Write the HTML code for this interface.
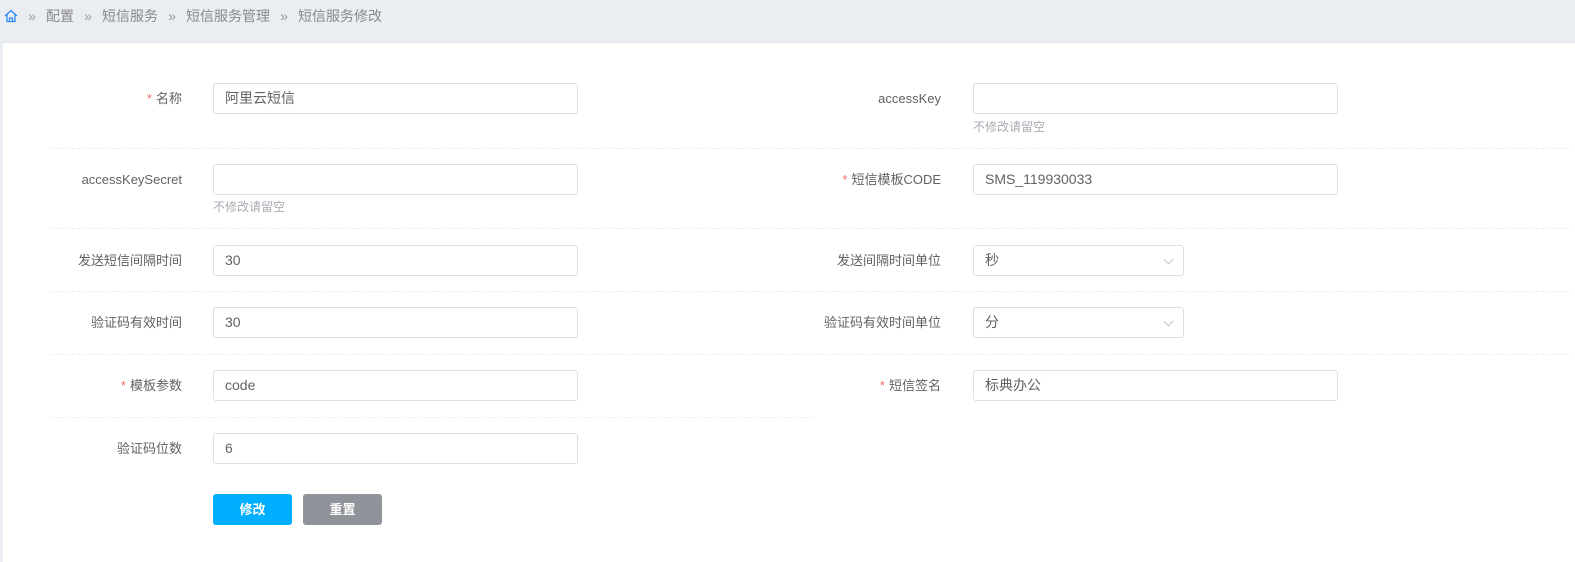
<!DOCTYPE html>
<html><head><meta charset="utf-8"><style>
*{margin:0;padding:0;box-sizing:border-box}
body{width:1575px;height:562px;background:#eaedf1;font-family:"Liberation Sans","Noto Sans CJK SC",sans-serif;position:relative;overflow:hidden}
.bc{position:absolute;top:7px;left:4px;font-size:14px;color:#8a8a8a;line-height:18px;white-space:nowrap}
.bc span.s{display:inline-block;width:28px;text-align:center;color:#999;font-size:14px}
.panel{position:absolute;top:42px;left:3px;right:0;bottom:0;background:#fff;border-top:1px solid #e2e5ea}
.lbl{position:absolute;font-size:13px;color:#606266;text-align:right;width:200px;line-height:31px}
.lbl i{color:#f56c6c;font-style:normal;margin-right:4px}
.inp{position:absolute;height:31px;border:1px solid #dcdfe6;border-radius:3px;font-size:14px;color:#606266;padding-left:11px;line-height:29px}
.hint{position:absolute;font-size:12px;color:#a8abb2;line-height:14px}
.dv{position:absolute;height:0;border-top:1px dashed #ebeef2}
.arr{position:absolute;right:11px;top:10px;width:7px;height:7px;border-right:1px solid #c0c4cc;border-bottom:1px solid #c0c4cc;transform:rotate(45deg)}
.btn{position:absolute;top:494px;height:31px;width:79px;border-radius:3px;color:#fff;font-size:13px;text-align:center;line-height:31px;font-weight:bold}
</style></head><body>
<div class="bc"><svg width="14" height="14" viewBox="0 0 14 14" style="vertical-align:-2px"><path d="M1 7 L7 1.5 L13 7 M3 5.5 V12.5 H11 V5.5 M5.5 12.5 V9 H8.5 V12.5" fill="none" stroke="#2d8cf0" stroke-width="1.3"/></svg><span class="s">»</span>配置<span class="s">»</span>短信服务<span class="s">»</span>短信服务管理<span class="s">»</span>短信服务修改</div>
<div class="panel"></div>

<div class="lbl" style="left:-18px;top:83px"><i>*</i>名称</div>
<div class="inp" style="left:213px;top:83px;width:365px">阿里云短信</div>
<div class="lbl" style="left:741px;top:83px">accessKey</div>
<div class="inp" style="left:973px;top:83px;width:365px"></div>
<div class="hint" style="left:973px;top:120px">不修改请留空</div>
<div class="dv" style="left:52px;top:148px;right:6px"></div>

<div class="lbl" style="left:-18px;top:164px">accessKeySecret</div>
<div class="inp" style="left:213px;top:164px;width:365px"></div>
<div class="hint" style="left:213px;top:200px">不修改请留空</div>
<div class="lbl" style="left:741px;top:164px"><i>*</i>短信模板CODE</div>
<div class="inp" style="left:973px;top:164px;width:365px">SMS_119930033</div>
<div class="dv" style="left:52px;top:228px;right:6px"></div>

<div class="lbl" style="left:-18px;top:245px">发送短信间隔时间</div>
<div class="inp" style="left:213px;top:245px;width:365px">30</div>
<div class="lbl" style="left:741px;top:245px">发送间隔时间单位</div>
<div class="inp" style="left:973px;top:245px;width:211px">秒<div class="arr"></div></div>
<div class="dv" style="left:52px;top:291px;right:6px"></div>

<div class="lbl" style="left:-18px;top:307px">验证码有效时间</div>
<div class="inp" style="left:213px;top:307px;width:365px">30</div>
<div class="lbl" style="left:741px;top:307px">验证码有效时间单位</div>
<div class="inp" style="left:973px;top:307px;width:211px">分<div class="arr"></div></div>
<div class="dv" style="left:52px;top:354px;right:6px"></div>

<div class="lbl" style="left:-18px;top:370px"><i>*</i>模板参数</div>
<div class="inp" style="left:213px;top:370px;width:365px">code</div>
<div class="lbl" style="left:741px;top:370px"><i>*</i>短信签名</div>
<div class="inp" style="left:973px;top:370px;width:365px">标典办公</div>
<div class="dv" style="left:52px;top:417px;width:760px"></div>

<div class="lbl" style="left:-18px;top:433px">验证码位数</div>
<div class="inp" style="left:213px;top:433px;width:365px">6</div>

<div class="btn" style="left:213px;background:#00aeff">修改</div>
<div class="btn" style="left:303px;background:#909399">重置</div>
</body></html>
